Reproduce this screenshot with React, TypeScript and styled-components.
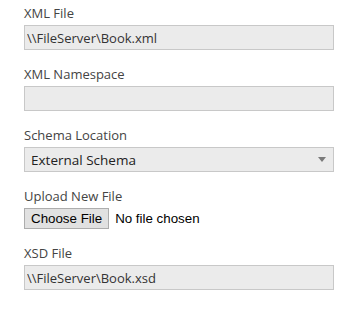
import styled, { createGlobalStyle } from 'styled-components'

const GlobalStyle = createGlobalStyle`
  body {
    margin: 0;
    background: #ffffff;
    font-family: "Open Sans", "Noto Sans", sans-serif;
  }
`

const Form = styled.form`
  display: flex;
  flex-direction: column;
  gap: 16px;
  padding: 5px 20px 0 24px;
`

const Field = styled.div`
  display: flex;
  flex-direction: column;
`

const Label = styled.label`
  font-size: 13px;
  line-height: 16px;
  color: #444444;
  margin-bottom: 4px;
`

const TextBox = styled.input`
  box-sizing: border-box;
  width: 310px;
  height: 25px;
  margin: 0;
  padding: 0 2px;
  background: #ebebeb;
  border: 1px solid #c8c8c8;
  border-radius: 0;
  font-family: "Open Sans", "Noto Sans", sans-serif;
  font-size: 13px;
  color: #333333;
  outline: none;
`

const SelectBox = styled.div`
  position: relative;
  width: 310px;
`

const Select = styled.select`
  box-sizing: border-box;
  width: 100%;
  height: 25px;
  margin: 0;
  padding: 0 24px 0 6px;
  appearance: none;
  background: #ebebeb;
  border: 1px solid #c8c8c8;
  border-radius: 0;
  font-family: "Open Sans", "Noto Sans", sans-serif;
  font-size: 13.5px;
  color: #222222;
  outline: none;
`

const Arrow = styled.svg`
  position: absolute;
  right: 8px;
  top: 10px;
  pointer-events: none;
`

const FileInput = styled.input`
  height: 21px;
  margin: 0;
  font-family: "Liberation Sans", Arial, sans-serif;
  font-size: 13.33px;
  color: #000000;

  &::file-selector-button {
    box-sizing: border-box;
    height: 21px;
    margin: 0 6px 0 0;
    padding: 0 6px;
    background: #e1e1e1;
    border: 1px solid #adadad;
    border-radius: 0;
    font-family: "Liberation Sans", Arial, sans-serif;
    font-size: 13.33px;
    color: #000000;
  }
`

const App = () => {
  return (
    <>
      <GlobalStyle />
      <Form>
        <Field>
          <Label>XML File</Label>
          <TextBox readOnly value={'\\\\FileServer\\Book.xml'} />
        </Field>
        <Field>
          <Label>XML Namespace</Label>
          <TextBox readOnly value="" />
        </Field>
        <Field>
          <Label>Schema Location</Label>
          <SelectBox>
            <Select defaultValue="external">
              <option value="external">External Schema</option>
              <option value="inline">Inline Schema</option>
            </Select>
            <Arrow width="8" height="5" viewBox="0 0 8 5">
              <path d="M0 0h8L4 5z" fill="#7a7a7a" />
            </Arrow>
          </SelectBox>
        </Field>
        <Field>
          <Label>Upload New File</Label>
          <FileInput type="file" />
        </Field>
        <Field>
          <Label>XSD File</Label>
          <TextBox readOnly value={'\\\\FileServer\\Book.xsd'} />
        </Field>
      </Form>
    </>
  )
}

export default App
